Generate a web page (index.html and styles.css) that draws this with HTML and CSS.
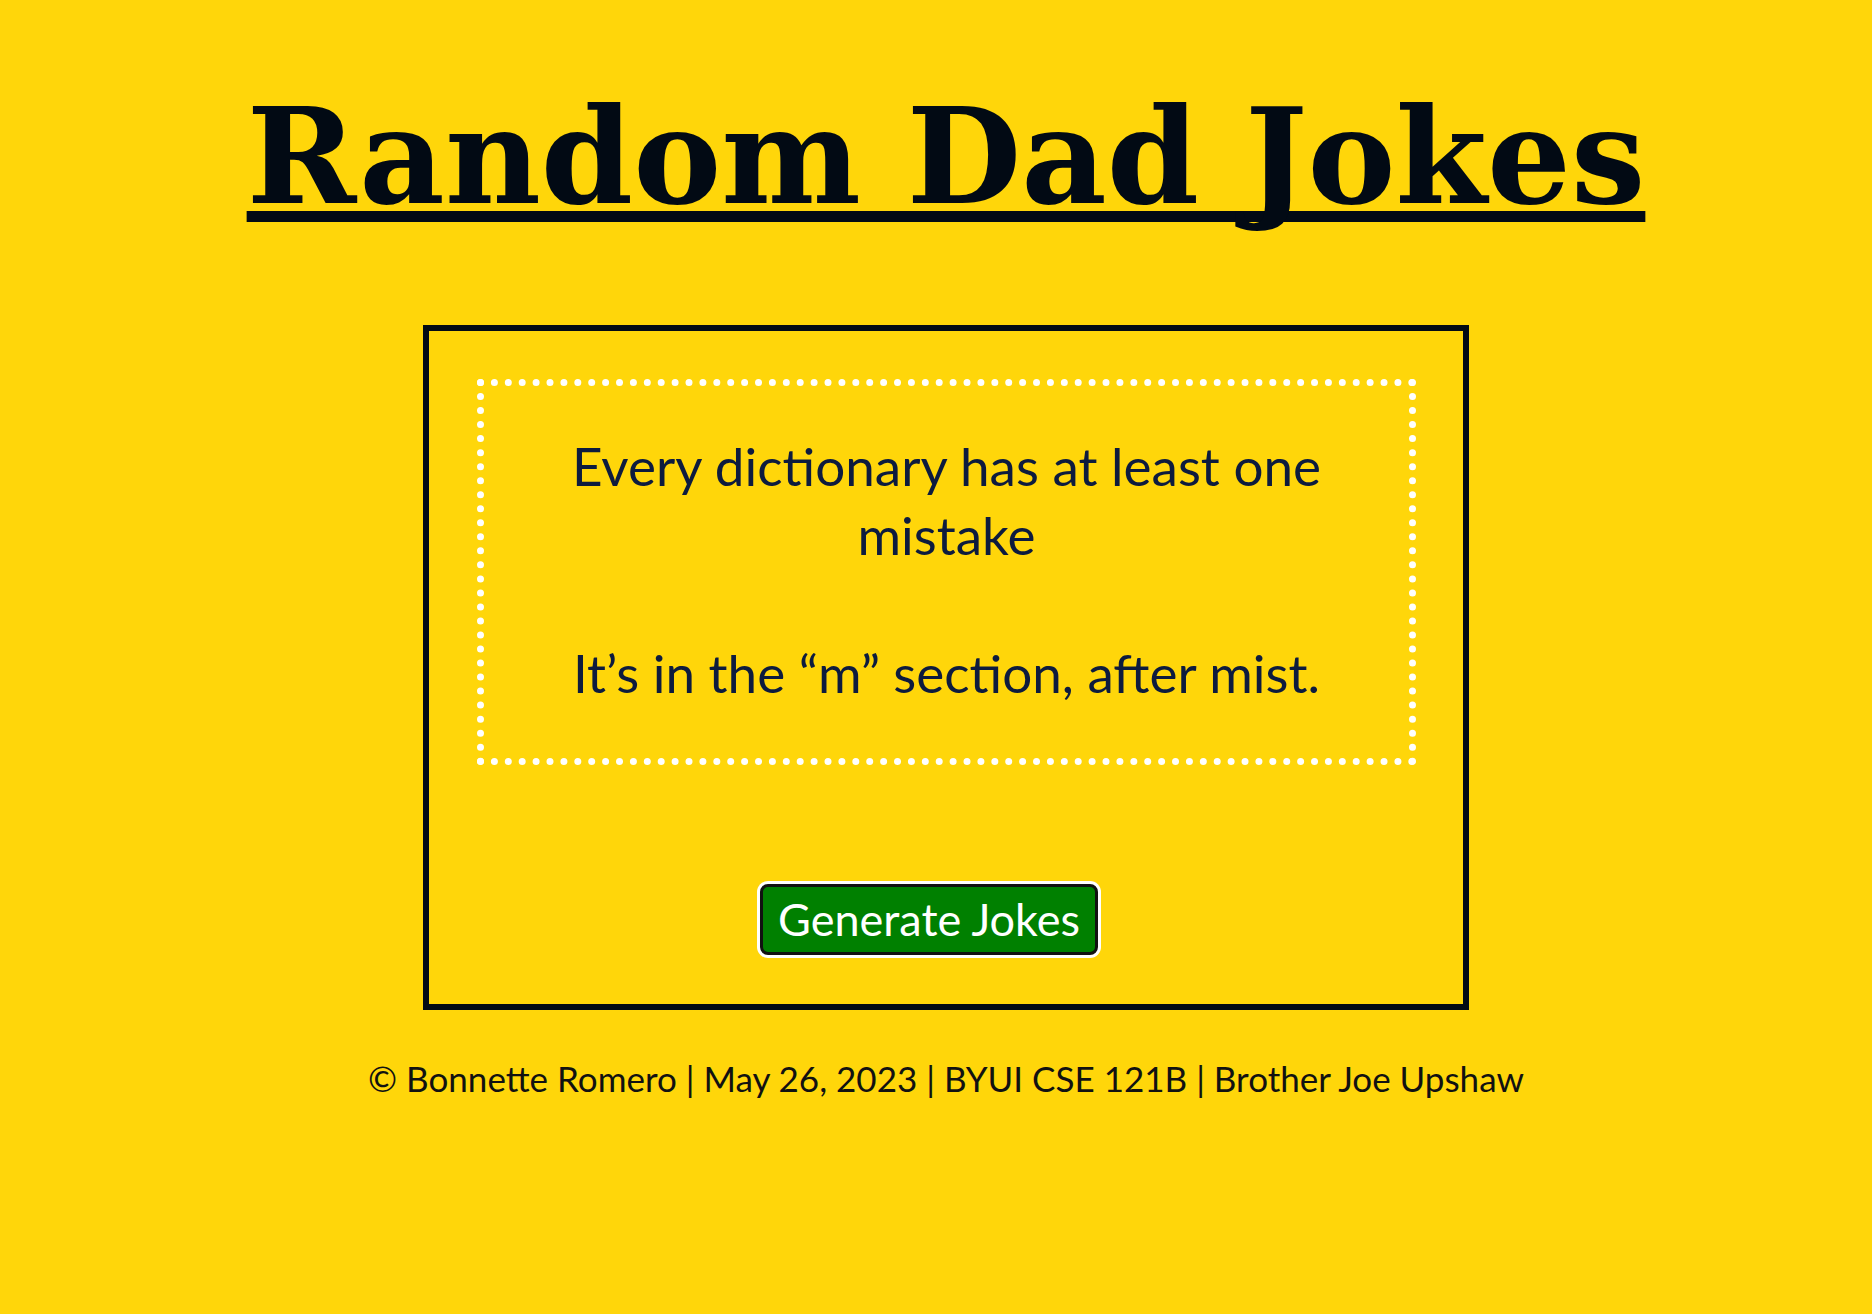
FILE: index.html
```html
<!DOCTYPE html>
<html lang="en">
<head>
<meta charset="utf-8">
<title>Random Dad Jokes</title>
<link rel="stylesheet" href="styles.css">
</head>
<body>
<div class="page">
  <header class="header">
    <h1 class="title">Random Dad Jokes</h1>
  </header>
  <main class="card">
    <div class="joke">
      <p class="joke-text">Every dictionary has at least one mistake<br><br>It’s in the “m” section, after mist.</p>
    </div>
    <div class="actions">
      <button class="btn" type="button">Generate Jokes</button>
    </div>
  </main>
  <footer class="footer">© Bonnette Romero | May 26, 2023 | BYUI CSE 121B | Brother Joe Upshaw</footer>
</div>
</body>
</html>
```
FILE: styles.css
```css
html, body {
  margin: 0;
  padding: 0;
  background: #ffd60a;
}
body {
  min-height: 1314px;
}
.page {
  display: flex;
  flex-direction: column;
  align-items: center;
  padding-left: 20px;
}
.header {
  padding-top: 78px;
}
.title {
  margin: 0;
  font-family: "DejaVu Serif", "Liberation Serif", serif;
  font-weight: 700;
  font-size: 132px;
  line-height: 1.2;
  color: #020a14;
  text-decoration: underline;
  text-decoration-thickness: 11px;
  text-underline-offset: 8px;
  text-decoration-skip-ink: none;
}
.card {
  margin-top: 89px;
  width: 1046px;
  box-sizing: border-box;
  border: 6px solid #020a14;
  padding: 48px 47px 49px 48px;
  display: flex;
  flex-direction: column;
  align-items: center;
}
.joke {
  width: 100%;
  box-sizing: border-box;
  border: 7px dotted #ffffff;
  padding: 45px 50px 51px;
}
.joke-text {
  margin: 0;
  text-align: center;
  font-family: "Lato", "Noto Sans", sans-serif;
  font-size: 53px;
  line-height: 69px;
  color: #0d1b3e;
}
.actions {
  margin-top: 119px;
  padding-right: 35px;
}
.btn {
  display: block;
  font-family: "Lato", "Noto Sans", sans-serif;
  font-size: 45px;
  line-height: 55px;
  color: #ffffff;
  background: #008000;
  border: 3px solid #111111;
  border-radius: 8px;
  box-shadow: 0 0 0 3px #ffffff;
  padding: 5px 15px;
  cursor: pointer;
}
.footer {
  margin-top: 47px;
  font-family: "Lato", "Noto Sans", sans-serif;
  font-size: 35px;
  line-height: 1.2;
  color: #111111;
}
```
